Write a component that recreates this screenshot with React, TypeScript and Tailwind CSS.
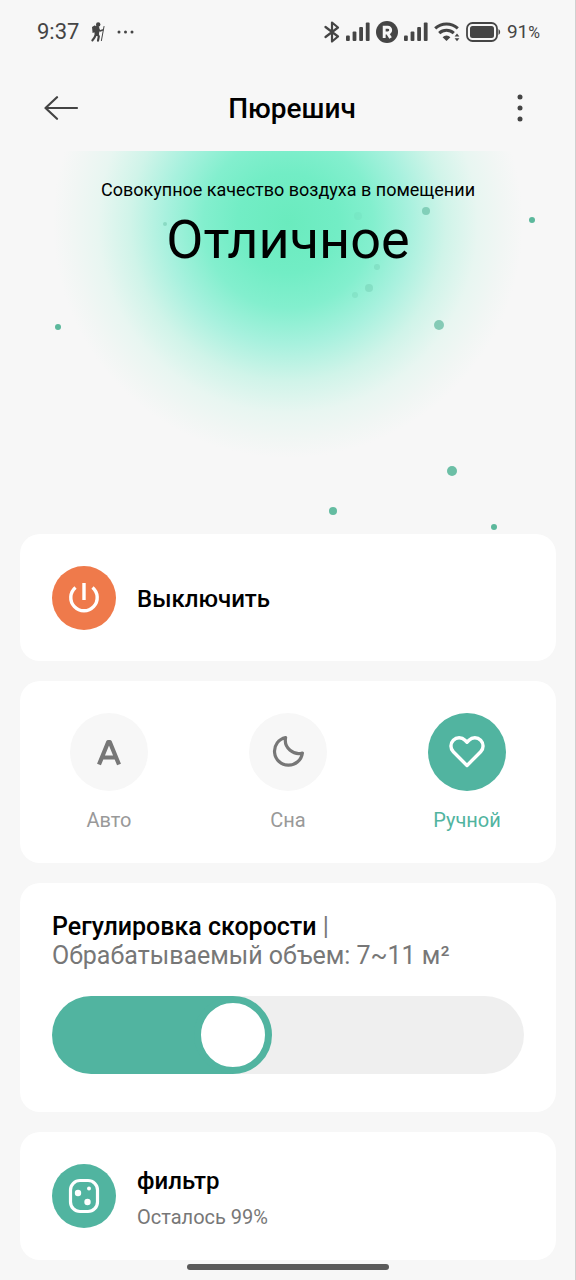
import { useState } from "react";
import type { CSSProperties, ReactNode } from "react";

function StatusBar() {
  return (
    <div className="flex h-16 items-center justify-between pl-[37px] pr-9 text-[#454545]">
      <div className="flex items-center gap-[11px]">
        <span className="text-[22px] leading-6">9:37</span>
        <svg className="h-5 w-4" viewBox="0 0 16 20" fill="none" stroke="currentColor" strokeLinecap="round" strokeLinejoin="round" aria-hidden="true">
          <circle cx="8.2" cy="2.4" r="2.2" fill="currentColor" stroke="none" />
          <path d="M2 5 5 3.2l1.6 6.2-4 1.6z" fill="currentColor" stroke="none" />
          <path d="M7 5.8 6.8 11" strokeWidth="4.8" />
          <path d="M7 11 8.8 14.6 8 18.6M6.2 11.500 4.600 15.400 2.400 18.400" strokeWidth="2.2" />
          <path d="M8 6.500 10 9l2.600-1" strokeWidth="1.600" />
          <path d="M14 4.500 11.400 18.600" strokeWidth="1" />
        </svg>
        <svg className="h-1 w-[18px]" viewBox="0 0 18 4" fill="currentColor" aria-hidden="true">
          <circle cx="2" cy="2" r="1.5" />
          <circle cx="8.500" cy="2" r="1.5" />
          <circle cx="15" cy="2" r="1.5" />
        </svg>
      </div>
      <div className="flex items-center gap-[6px]">
        <svg className="h-[22px] w-4" viewBox="0 0 16 22" fill="none" stroke="currentColor" strokeWidth="2.2" strokeLinejoin="round" strokeLinecap="round" aria-hidden="true">
          <path d="M1.500 6 14 15.500 8 20.500V1.500L14 6.500 1.500 16" />
        </svg>
        <Signal />
        <svg className="h-[22px] w-[22px]" viewBox="0 0 22 22" aria-hidden="true">
          <circle cx="11" cy="11" r="11" fill="currentColor" />
          <path d="M8.200 17V6.200h3.600a2.900 2.900 0 0 1 0 5.800H8.200M11.400 12l3.200 5" fill="none" stroke="#f7f7f7" strokeWidth="2.900" />
        </svg>
        <Signal />
        <svg className="h-5 w-[26px]" viewBox="0 0 26 20" fill="none" stroke="currentColor" aria-hidden="true">
          <path d="M1.200 6.400a16.500 16.500 0 0 1 22.600 0" strokeWidth="3" />
          <path d="M5.200 11.200a10.600 10.600 0 0 1 14.600 0" strokeWidth="3" />
          <path d="M8.600 15.200a5.600 5.600 0 0 1 7.800 0L12.500 19z" fill="currentColor" stroke="none" />
          <path d="m20.600 14.600 2.400-3 2.400 3zM20.600 16.200l2.400 3 2.400-3z" fill="currentColor" stroke="none" />
        </svg>
        <svg className="h-5 w-[35px]" viewBox="0 0 35 20" aria-hidden="true">
          <rect x="1" y="1" width="30" height="18" rx="5.500" fill="none" stroke="currentColor" strokeWidth="1.800" />
          <rect x="4" y="4" width="24" height="12" rx="2.500" fill="currentColor" />
          <path d="M32.500 7a3.500 3.500 0 0 1 0 6z" fill="currentColor" />
        </svg>
        <span className="text-[19px] leading-6">
          91<span className="text-[16px]">%</span>
        </span>
      </div>
    </div>
  );
}

function Signal() {
  return (
    <svg className="h-5 w-6" viewBox="0 0 24 20" fill="currentColor" aria-hidden="true">
      <rect x="0" y="13.500" width="3.800" height="5.500" rx="1" />
      <rect x="6.600" y="9.500" width="3.800" height="9.500" rx="1" />
      <rect x="13.200" y="5" width="3.800" height="14" rx="1" />
      <rect x="19.800" y="0.500" width="3.800" height="18.500" rx="1" />
    </svg>
  );
}

function Header() {
  return (
    <header className="flex h-[87px] items-center justify-between px-10">
      <button type="button" aria-label="Назад" className="flex h-10 w-10 items-center justify-end text-[#444]">
        <svg className="h-6 w-9" viewBox="0 0 36 24" fill="none" stroke="currentColor" strokeWidth="2.200" strokeLinecap="round" strokeLinejoin="round" aria-hidden="true">
          <path d="M33 12H1.500M13 1.200 1.500 12 13 22.800" />
        </svg>
      </button>
      <h1 className="pt-[2px] text-[28px] font-medium leading-8 text-black">Пюрешич</h1>
      <button type="button" aria-label="Меню" className="flex h-10 w-8 items-center justify-center text-[#444]">
        <svg className="h-7 w-2" viewBox="0 0 8 28" fill="currentColor" aria-hidden="true">
          <circle cx="4" cy="3" r="2.500" />
          <circle cx="4" cy="14" r="2.500" />
          <circle cx="4" cy="25" r="2.500" />
        </svg>
      </button>
    </header>
  );
}

const particles = [
  { x: 426, y: 60, r: 4, o: 0.6 },
  { x: 532, y: 69, r: 3, o: 1 },
  { x: 165, y: 73, r: 2, o: 0.4 },
  { x: 377, y: 116, r: 3, o: 0.25 },
  { x: 369, y: 137, r: 4, o: 0.3 },
  { x: 355, y: 144, r: 3, o: 0.2 },
  { x: 358, y: 65, r: 4, o: 0.1 },
  { x: 58, y: 176, r: 3, o: 1 },
  { x: 439, y: 174, r: 5, o: 0.7 },
  { x: 452, y: 320, r: 5, o: 0.9 },
  { x: 333, y: 360, r: 4, o: 0.95 },
  { x: 494, y: 376, r: 3, o: 1 },
];

function AirQuality() {
  return (
    <section className="relative h-[383px] overflow-hidden bg-[radial-gradient(circle_at_50%_72px,#6aebbe_0px,#72edc5_50px,#83efce_85px,#a8f1de_122px,#d0f4e9_158px,#e8f6f1_190px,#f1f6f4_215px,#f7f7f7_235px)] text-center text-black">
      <svg className="absolute inset-0 h-full w-full" viewBox="0 0 576 383" aria-hidden="true">
        {particles.map((p) => (
          <circle key={`${p.x}-${p.y}`} cx={p.x} cy={p.y} r={p.r} fill="#5cb89c" opacity={p.o} />
        ))}
      </svg>
      <p className="relative pt-[27px] text-[18px] leading-6">Совокупное качество воздуха в помещении</p>
      <p className="relative pt-[6px] text-[54px] leading-[64px]">Отличное</p>
    </section>
  );
}

function Mode({ label, active, onSelect, children }: { label: string; active: boolean; onSelect: () => void; children: ReactNode }) {
  return (
    <button type="button" aria-pressed={active} onClick={onSelect} className="flex w-[78px] flex-col items-center gap-[15px]">
      <span className={active ? "flex h-[78px] w-[78px] items-center justify-center rounded-full bg-[#51b4a0] text-white" : "flex h-[78px] w-[78px] items-center justify-center rounded-full bg-[#f7f7f7] text-[#777]"}>
        {children}
      </span>
      <span className={active ? "text-[20px] leading-7 text-[#51b4a0]" : "text-[20px] leading-7 text-[#999]"}>{label}</span>
    </button>
  );
}

function Modes() {
  const [mode, setMode] = useState("manual");
  return (
    <section className="flex justify-between rounded-[20px] bg-white px-[50px] pb-[29px] pt-8">
      <Mode label="Авто" active={mode === "auto"} onSelect={() => setMode("auto")}>
        <svg className="h-8 w-8" viewBox="0 0 32 32" fill="none" stroke="currentColor" strokeWidth="4.200" strokeLinejoin="round" aria-hidden="true">
          <path d="M6 28.500 15.200 6h1.600L26 28.500M9.500 21.500h13" />
        </svg>
      </Mode>
      <Mode label="Сна" active={mode === "sleep"} onSelect={() => setMode("sleep")}>
        <svg className="h-9 w-9" viewBox="0 0 36 36" fill="none" stroke="currentColor" strokeWidth="3.200" strokeLinejoin="round" aria-hidden="true">
          <path d="M15.600 3.500A14 14 0 1 0 32.400 19C24 21.500 13.500 14.500 15.600 3.500Z" />
        </svg>
      </Mode>
      <Mode label="Ручной" active={mode === "manual"} onSelect={() => setMode("manual")}>
        <svg className="h-9 w-9" viewBox="0 0 36 36" fill="none" stroke="currentColor" strokeWidth="3.400" strokeLinejoin="round" aria-hidden="true">
          <path d="M18 31.500 4.300 17.800A8.300 8.300 0 0 1 4.300 6.200 8.300 8.300 0 0 1 16 6.200L18 8.200 20 6.200A8.300 8.300 0 0 1 31.700 6.200 8.300 8.300 0 0 1 31.700 17.800Z" />
        </svg>
      </Mode>
    </section>
  );
}

function Speed() {
  const [speed, setSpeed] = useState(36);
  const fill: CSSProperties = {
    backgroundImage: `linear-gradient(to right, #51b4a0 calc(39px + (100% - 78px) * ${speed / 100}), #efefef 0)`,
  };
  return (
    <section className="rounded-[20px] bg-white px-8 pb-[38px] pt-[29px]">
      <label htmlFor="speed" className="block text-[25px] leading-[29px] text-[#777]">
        <span className="font-medium text-black">Регулировка скорости</span> |
        <br />
        Обрабатываемый объем: 7~11 м²
      </label>
      <input
        id="speed"
        type="range"
        min={0}
        max={100}
        value={speed}
        onChange={(e) => setSpeed(Number(e.target.value))}
        style={fill}
        className="mt-[26px] block h-[78px] w-full appearance-none rounded-full [&::-webkit-slider-thumb]:h-[78px] [&::-webkit-slider-thumb]:w-[78px] [&::-webkit-slider-thumb]:appearance-none [&::-webkit-slider-thumb]:rounded-full [&::-webkit-slider-thumb]:border-[7px] [&::-webkit-slider-thumb]:border-solid [&::-webkit-slider-thumb]:border-[#51b4a0] [&::-webkit-slider-thumb]:bg-white"
      />
    </section>
  );
}

export default function App() {
  return (
    <div className="relative min-h-screen bg-[#f7f7f7] font-['Roboto','Noto_Sans',sans-serif]">
      <StatusBar />
      <Header />
      <AirQuality />
      <main className="flex flex-col gap-5 px-5">
        <button type="button" className="flex h-[127px] items-center gap-[21px] rounded-[20px] bg-white px-8 text-left">
          <span className="flex h-16 w-16 items-center justify-center rounded-full bg-[#ef7a4b] text-white">
            <svg className="h-8 w-8" viewBox="0 0 32 32" fill="none" stroke="currentColor" strokeWidth="3.400" aria-hidden="true">
              <path d="M16 1V18M7.500 5.500A13.200 13.200 0 1 0 24.500 5.500" />
            </svg>
          </span>
          <span className="pt-[2px] text-[24px] font-medium leading-7 text-black">Выключить</span>
        </button>
        <Modes />
        <Speed />
        <button type="button" className="flex h-32 items-center gap-[21px] rounded-[20px] bg-white px-8 text-left">
          <span className="flex h-16 w-16 items-center justify-center rounded-full bg-[#51b4a0] text-white">
            <svg className="h-9 w-9" viewBox="0 0 36 36" fill="none" aria-hidden="true">
              <rect x="4.500" y="2.500" width="27" height="31" rx="9.500" stroke="currentColor" strokeWidth="3.200" />
              <circle cx="12" cy="15" r="3.200" fill="currentColor" />
              <circle cx="23" cy="10.500" r="2" fill="currentColor" />
              <circle cx="21.500" cy="24" r="3.200" fill="currentColor" />
            </svg>
          </span>
          <span className="flex flex-col gap-2 pt-[6px]">
            <span className="text-[24px] font-medium leading-7 text-black">фильтр</span>
            <span className="text-[20px] leading-7 text-[#777]">Осталось 99%</span>
          </span>
        </button>
      </main>
      <div className="flex h-5 justify-center pt-1">
        <div className="h-[6px] w-[202px] rounded-full bg-[#5a5a5a]" />
      </div>
      <div className="absolute inset-y-0 right-0 w-px bg-[#d0d0d0]" />
    </div>
  );
}
